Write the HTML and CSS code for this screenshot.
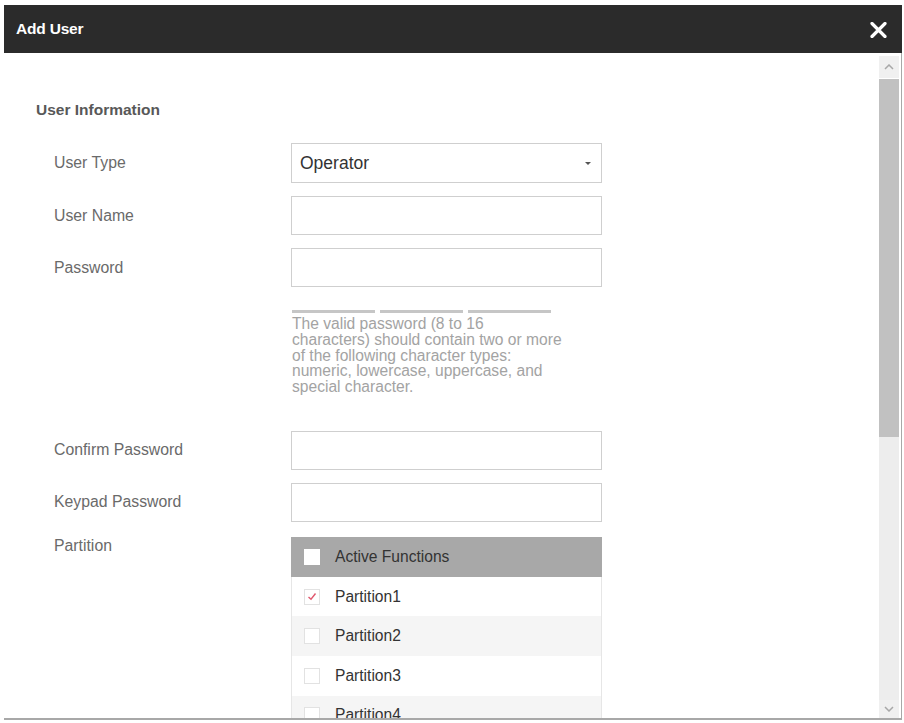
FILE: index.html
```html
<!DOCTYPE html>
<html>
<head>
<meta charset="utf-8">
<link rel="stylesheet" href="styles.css">
</head>
<body>
<div class="dialog">
  <div class="titlebar">
    <span class="title">Add User</span>
    <svg class="close" width="17" height="16" viewBox="0 0 17 16"><path d="M2 1.5 L15 14.5 M15 1.5 L2 14.5" stroke="#fff" stroke-width="3.2" stroke-linecap="round"/></svg>
  </div>
  <div class="body">
    <div class="content">
      <div class="section-title">User Information</div>
      <div class="row first">
        <div class="label">User Type</div>
        <div class="select"><span>Operator</span><span class="caret"></span></div>
      </div>
      <div class="row">
        <div class="label">User Name</div>
        <div class="input"></div>
      </div>
      <div class="row">
        <div class="label">Password</div>
        <div class="input"></div>
      </div>
      <div class="row strength-row">
        <div class="label"></div>
        <div class="pwd-info">
          <div class="strength"><span></span><span></span><span></span></div>
          <div class="hint">The valid password (8 to 16 characters) should contain two or more of the following character types: numeric, lowercase, uppercase, and special character.</div>
        </div>
      </div>
      <div class="row confirm">
        <div class="label">Confirm Password</div>
        <div class="input"></div>
      </div>
      <div class="row">
        <div class="label">Keypad Password</div>
        <div class="input"></div>
      </div>
      <div class="row top">
        <div class="label">Partition</div>
        <div class="table">
          <div class="thead"><span class="cb white"></span><span>Active Functions</span></div>
          <div class="tr"><span class="cb checked"><svg width="10" height="9" viewBox="0 0 10 9"><path d="M1.5 5 L4 7.3 L8.5 1.5" fill="none" stroke="#e0586e" stroke-width="1.4"/></svg></span><span>Partition1</span></div>
          <div class="tr alt"><span class="cb"></span><span>Partition2</span></div>
          <div class="tr"><span class="cb"></span><span>Partition3</span></div>
          <div class="tr alt"><span class="cb"></span><span>Partition4</span></div>
        </div>
      </div>
    </div>
    <div class="scrollbar">
      <div class="sb-btn up"><svg width="10" height="6" viewBox="0 0 10 6"><path d="M1 5 L5 1 L9 5" fill="none" stroke="#a8a8a8" stroke-width="1.5"/></svg></div>
      <div class="sb-thumb"></div>
      <div class="sb-track"></div>
      <div class="sb-btn down"><svg width="10" height="6" viewBox="0 0 10 6"><path d="M1 1 L5 5 L9 1" fill="none" stroke="#a8a8a8" stroke-width="1.5"/></svg></div>
    </div>
  </div>
</div>
</body>
</html>
```
FILE: styles.css
```css
html, body {
  margin: 0;
  padding: 0;
  background: #fff;
}
body {
  font-family: "Liberation Sans", Arial, sans-serif;
}
.dialog {
  margin: 5px 2px 0 4px;
  height: 715px;
  display: flex;
  flex-direction: column;
}
.titlebar {
  height: 48px;
  flex: none;
  background: #2b2b2b;
  display: flex;
  align-items: center;
  justify-content: space-between;
  padding: 0 15px 0 12px;
}
.title {
  color: #fff;
  font-weight: bold;
  font-size: 15.5px;
  letter-spacing: -0.2px;
}
.close {
  display: block;
  margin-top: 1px;
}
.body {
  flex: 1;
  display: flex;
  border-right: 1px solid #a8a8a8;
  border-bottom: 2px solid #a8a8a8;
  overflow: hidden;
}
.content {
  flex: 1;
  overflow: hidden;
  padding: 47px 0 0 32px;
}
.section-title {
  font-size: 15.5px;
  font-weight: bold;
  color: #585858;
  line-height: 20px;
}
.row {
  display: flex;
  align-items: center;
  margin-top: 13px;
  padding-left: 18px;
}
.row.first { margin-top: 23px; }
.row.top { align-items: flex-start; margin-top: 15px; }
.row.confirm { margin-top: 36px; }
.label {
  width: 237px;
  flex: none;
  font-size: 15.8px;
  color: #6a6a6a;
  line-height: 18px;
}
.input, .select {
  width: 309px;
  height: 37px;
  border: 1px solid #cfcfcf;
  background: #fff;
}
.select {
  height: 38px;
  display: flex;
  align-items: center;
  justify-content: space-between;
  padding: 0 10px 0 8px;
  width: 291px;
  font-size: 17.5px;
  color: #333;
}
.caret {
  width: 0;
  height: 0;
  border-left: 3px solid transparent;
  border-right: 3px solid transparent;
  border-top: 3px solid #555;
}
.strength-row { margin-top: 23px; align-items: flex-start; }
.strength {
  display: flex;
  gap: 5px;
  padding-left: 1px;
}
.strength span {
  width: 83px;
  height: 3px;
  background: #c6c6c6;
}
.hint {
  width: 273px;
  margin-top: 3px;
  padding-left: 1px;
  font-size: 15.6px;
  line-height: 15.75px;
  color: #a3a3a3;
}
.table {
  width: 311px;
}
.thead, .tr {
  display: flex;
  align-items: center;
  font-size: 15.6px;
  color: #333;
  padding-left: 13px;
  box-sizing: border-box;
}
.thead {
  height: 40px;
  background: #a8a8a8;
}
.tr {
  height: 39.6px;
  background: #fff;
  border-left: 1px solid #e6e6e6;
  border-right: 1px solid #e6e6e6;
  padding-left: 12px;
}
.tr.alt { background: #f5f5f5; }
.cb {
  width: 14px;
  height: 14px;
  border: 1px solid #e2e2e2;
  background: #fff;
  margin-right: 15px;
  display: flex;
  align-items: center;
  justify-content: center;
}
.cb.white {
  border-color: #fff;
}
.scrollbar {
  width: 20px;
  flex: none;
  margin-right: 2px;
  display: flex;
  flex-direction: column;
  padding-top: 3px;
  background: #fff;
}
.sb-btn {
  background: #f0f0f0;
  display: flex;
  align-items: center;
  justify-content: center;
}
.sb-btn.up { height: 22px; }
.sb-btn.down { height: 18px; }
.sb-thumb {
  height: 358px;
  margin-top: 1px;
  background: #c1c1c1;
}
.sb-track {
  flex: 1;
  background: #ededed;
}
```
